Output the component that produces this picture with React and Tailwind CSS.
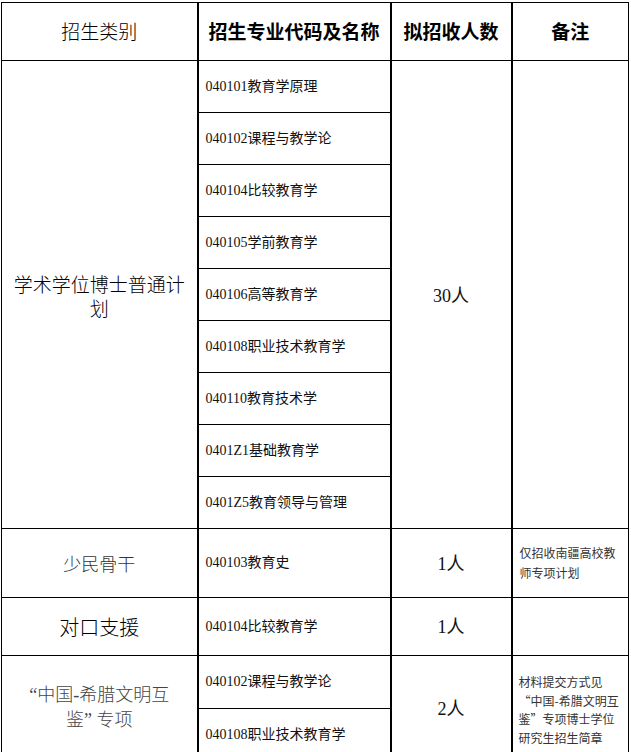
import React from 'react';

const mixed = "font-['Liberation_Serif','Noto_Sans_CJK_SC',serif]";
const sans = "font-['Noto_Sans_CJK_SC','Liberation_Sans',sans-serif]";

const academic = [
  '040101教育学原理',
  '040102课程与教学论',
  '040104比较教育学',
  '040105学前教育学',
  '040106高等教育学',
  '040108职业技术教育学',
  '040110教育技术学',
  '0401Z1基础教育学',
  '0401Z5教育领导与管理',
];

function CodeCell({ children, h = 'h-[52px]' }) {
  return (
    <td className={`border border-l-2 border-black ${h} pl-[7px] text-left text-[14px] leading-none text-[#111] ${mixed}`}>
      {children}
    </td>
  );
}

export default function App() {
  return (
    <div className="bg-white w-[631px] h-[752px] overflow-hidden pt-[2px] pl-px">
      <table className="table-fixed border-collapse w-[627px]">
        <colgroup>
          <col className="w-[196px]" />
          <col className="w-[193px]" />
          <col className="w-[121px]" />
          <col className="w-[117px]" />
        </colgroup>
        <thead>
          <tr className="h-[58px]">
            <th className={`border border-black text-[19px] font-light text-black ${sans}`}>招生类别</th>
            <th className={`border border-l-2 border-black text-[19px] font-bold text-black ${sans}`}>招生专业代码及名称</th>
            <th className={`border border-l-2 border-black text-[19px] font-bold text-black ${sans}`}>拟招收人数</th>
            <th className={`border border-l-2 border-black text-[19px] font-bold text-black ${sans}`}>备注</th>
          </tr>
        </thead>
        <tbody>
          {academic.map((item, i) => (
            <tr key={item}>
              {i === 0 && (
                <td rowSpan={9} className={`border border-black px-2 pt-[3px] text-center text-[19px] font-light leading-[24px] text-black ${sans}`}>
                  学术学位博士普通计划
                </td>
              )}
              <CodeCell>{item}</CodeCell>
              {i === 0 && (
                <>
                  <td rowSpan={9} className={`border border-l-2 border-black pt-[3px] text-center text-[18px] text-[#111] ${mixed}`}>
                    30人
                  </td>
                  <td rowSpan={9} className="border border-l-2 border-black"></td>
                </>
              )}
            </tr>
          ))}
          <tr>
            <td className={`border border-black text-center text-[18px] font-light text-[#333] ${sans}`}>少民骨干</td>
            <CodeCell h="h-[69px]">040103教育史</CodeCell>
            <td className={`border border-l-2 border-black pt-[2px] text-center text-[18px] text-[#111] ${mixed}`}>1人</td>
            <td className={`border border-l-2 border-black pl-[7px] pr-1 text-left text-[12px] leading-[20px] text-[#333] ${sans}`}>
              仅招收南疆高校教师专项计划
            </td>
          </tr>
          <tr>
            <td className={`border border-black text-center text-[20px] font-light text-black ${sans}`}>对口支援</td>
            <CodeCell h="h-[58px]">040104比较教育学</CodeCell>
            <td className={`border border-l-2 border-black pt-[2px] text-center text-[18px] text-[#111] ${mixed}`}>1人</td>
            <td className="border border-l-2 border-black"></td>
          </tr>
          <tr>
            <td rowSpan={2} className={`border border-black px-6 text-center text-[18px] font-light leading-[25px] text-[#444] ${mixed}`}>
              “中国-希腊文明互鉴”&nbsp;专项
            </td>
            <CodeCell h="h-[53px]">040102课程与教学论</CodeCell>
            <td rowSpan={2} className={`border border-l-2 border-black pt-[3px] text-center text-[18px] text-[#111] ${mixed}`}>2人</td>
            <td rowSpan={2} className={`border border-l-2 border-black pl-[6px] pt-[4px] text-left text-[12px] leading-[18.5px] whitespace-nowrap text-[#333] ${sans}`}>
              材料提交方式见
              <br />
              “中国-希腊文明互
              <br />
              鉴”专项博士学位
              <br />
              研究生招生简章
            </td>
          </tr>
          <tr>
            <CodeCell>040108职业技术教育学</CodeCell>
          </tr>
        </tbody>
      </table>
    </div>
  );
}
